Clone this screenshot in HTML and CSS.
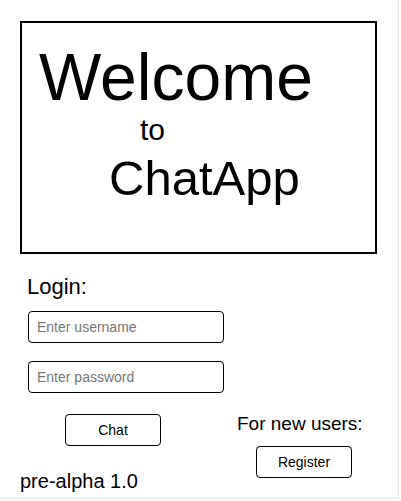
FILE: index.html
```html
<!DOCTYPE html>
<html lang="en">
<head>
<meta charset="utf-8">
<title>ChatApp</title>
<link rel="stylesheet" href="styles.css">
</head>
<body>
<div class="page">
  <div class="hero">
    <div class="hero-welcome">Welcome</div>
    <div class="hero-to">to</div>
    <div class="hero-app">ChatApp</div>
  </div>
  <div class="main">
    <div class="login">
      <div class="login-title">Login:</div>
      <input class="field field-user" type="text" placeholder="Enter username">
      <input class="field field-pass" type="password" placeholder="Enter password">
    </div>
    <div class="row">
      <div class="left-col">
        <button class="btn btn-chat">Chat</button>
        <div class="version">pre-alpha 1.0</div>
      </div>
      <div class="right-col">
        <div class="new-users">For new users:</div>
        <button class="btn btn-register">Register</button>
      </div>
    </div>
  </div>
</div>
</body>
</html>
```

FILE: styles.css
```css
html, body {
  margin: 0;
  padding: 0;
  background: #ffffff;
}

body {
  font-family: "Liberation Sans", Arial, sans-serif;
  color: #000;
}

.page {
  width: 378px;
  height: 477px;
  padding: 21px 0 0 20px;
  border-right: 1px solid #e2e2e2;
  border-bottom: 1px solid #e2e2e2;
  background: #fff;
}

.hero {
  box-sizing: border-box;
  width: 357px;
  height: 233px;
  border: 2px solid #000;
  padding: 21px 0 0 17px;
}

.hero-welcome {
  font-size: 66px;
  line-height: 1;
}

.hero-to {
  font-size: 30px;
  line-height: 1;
  margin: 5px 0 0 101px;
}

.hero-app {
  font-size: 49px;
  line-height: 1;
  margin: 9px 0 0 70px;
}

.main {
  margin-top: 22px;
}

.login {
  display: flex;
  flex-direction: column;
  align-items: flex-start;
  padding-left: 8px;
}

.login-title {
  font-size: 22px;
  line-height: 1;
  margin-left: -1px;
}

.field {
  box-sizing: border-box;
  width: 196px;
  height: 32px;
  border: 1px solid #000;
  border-radius: 4px;
  padding: 0 8px;
  font-family: "Liberation Sans", Arial, sans-serif;
  font-size: 14px;
  background: #fff;
  outline: none;
}

.field::placeholder {
  color: #767676;
}

.field-user {
  margin-top: 13px;
}

.field-pass {
  margin-top: 18px;
}

.row {
  display: flex;
  margin-top: 21px;
}

.left-col {
  width: 216px;
  display: flex;
  flex-direction: column;
  align-items: flex-start;
}

.btn {
  box-sizing: border-box;
  width: 96px;
  height: 32px;
  border: 1px solid #000;
  border-radius: 4px;
  background: #fff;
  font-family: "Liberation Sans", Arial, sans-serif;
  font-size: 14px;
  color: #000;
  padding: 0;
}

.btn-chat {
  margin-left: 45px;
}

.version {
  font-size: 20px;
  line-height: 1;
  margin-top: 25px;
}

.right-col {
  display: flex;
  flex-direction: column;
  align-items: flex-start;
}

.new-users {
  font-size: 19px;
  line-height: 1;
  margin-left: 1px;
}

.btn-register {
  margin-top: 13px;
  margin-left: 20px;
}
```
